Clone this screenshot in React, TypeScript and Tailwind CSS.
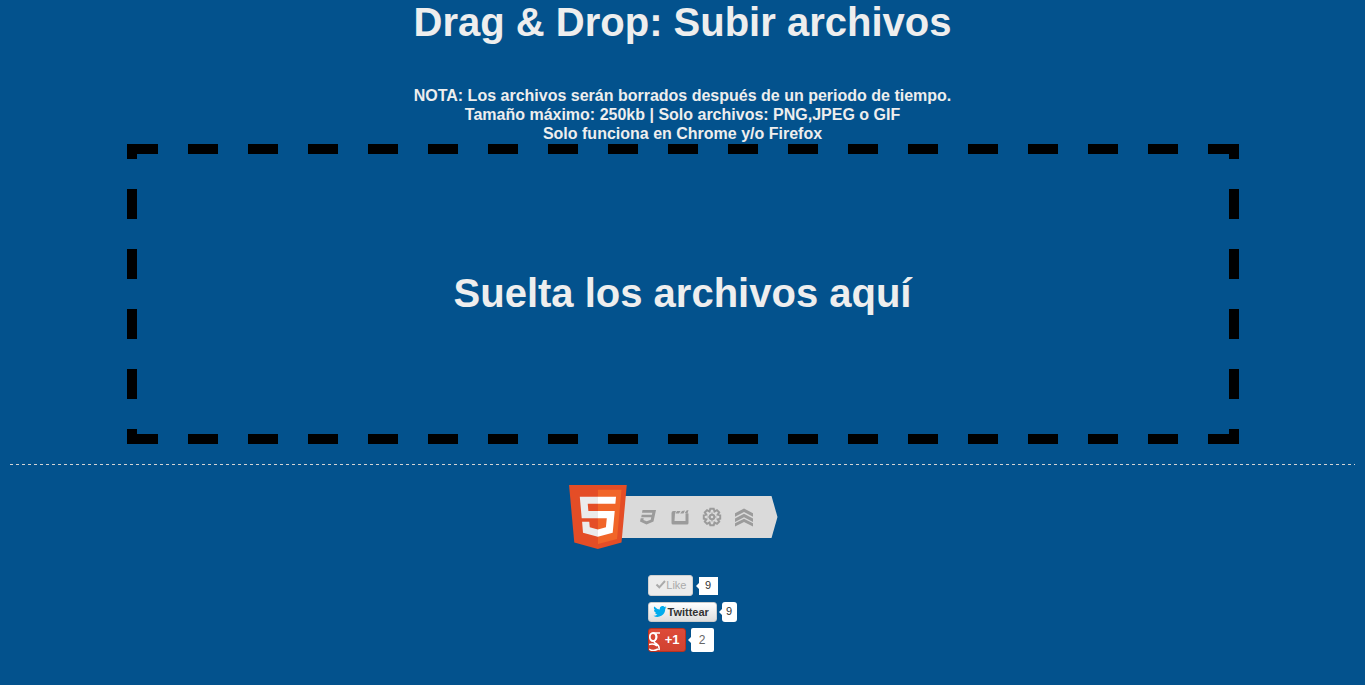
import React from "react";

const noteLines = [
  "NOTA: Los archivos serán borrados después de un periodo de tiempo.",
  "Tamaño máximo: 250kb | Solo archivos: PNG,JPEG o GIF",
  "Solo funciona en Chrome y/o Firefox",
];

function DashedX({ className }: { className: string }) {
  return (
    <span
      className={`absolute inset-x-0 h-[10px] bg-[repeating-linear-gradient(90deg,#000_0_30px,transparent_30px_60px)] bg-[position:1px_0] bg-[size:60px_10px] ${className}`}
    />
  );
}

function DashedY({ className }: { className: string }) {
  return (
    <span
      className={`absolute inset-y-0 w-[10px] bg-[linear-gradient(180deg,#000_0_15px,transparent_15px_45px,#000_45px_60px)] bg-[size:10px_60px] ${className}`}
    />
  );
}

function DropZone() {
  return (
    <section className="relative mx-auto flex h-[300px] w-[calc(80%+20px)] items-center justify-center pb-0.5">
      <DashedX className="top-0" />
      <DashedX className="bottom-0" />
      <DashedY className="left-0" />
      <DashedY className="right-0" />
      <h2 className="text-[40px] leading-[46px] font-bold">Suelta los archivos aquí</h2>
    </section>
  );
}

function Html5Badge() {
  return (
    <svg width="211" height="64" viewBox="0 0 211 64" role="img" aria-label="HTML5">
      <path d="M50 11H203.500L209.500 32L203.500 53H50Z" fill="#dadada" />
      <g transform="translate(-2.8 0) scale(.128 .125)">
        <path d="M71 460 30 0H481L440 460 255 512Z" fill="#e44d26" />
        <path d="M256 472 405 431 440 37H256Z" fill="#f16529" />
        <path d="M256 208H181L176 150H256V94H114L129 265H256ZM256 355H255L192 338 188 293H132L139 382 255 414H256Z" fill="#ebebeb" />
        <path d="M255 208V265H325L318 338 255 355V414L371 382 387 208ZM255 94V150H392L397 94Z" fill="#fff" />
      </g>
      <path d="M74.500 25H88L85.500 36.500 78.500 39.500 72 36.500 72.700 33.200H75.700L75.400 35 78.700 36.200 82.700 34.700 83.300 32.300H73.200L73.700 29.800H83.900L84.300 27.800H74Z" fill="#9b9b9b" />
      <path d="M103.500 28Q103.500 26 105.500 26H108L107 28.500 106.500 36H117.500V28.500H120.500V38Q120.500 39.500 119 39.500H105Q103.500 39.500 103.500 38ZM107.500 28.500 109 26H112.500L111 28.500ZM112.200 28.500 114 26 117 25.500 115.500 28.500ZM116.800 28 118.500 25.500 120.500 25 119.500 28.500Z" fill="#9b9b9b" />
      <g fill="none" stroke="#9b9b9b">
        <path
          d="M142.300 23.800H145.700L146.500 26.500 149 25.200 151.200 27.400 149.700 29.700 152.200 30.300V33.700L149.700 34.300 151.200 36.600 149 38.800 146.500 37.500 145.700 40.200H142.300L141.500 37.500 139 38.800 136.800 36.600 138.300 34.300 135.800 33.700V30.300L138.300 29.700 136.800 27.400 139 25.200 141.500 26.500Z"
          strokeWidth="2"
        />
        <circle cx="144" cy="32" r="2.300" strokeWidth="2" />
        <path d="M144 27.500V29.500M144 34.500V36.500M139.500 32H141.500M146.500 32H148.500" strokeWidth="1" />
      </g>
      <path d="M167 28.200 176 23.500 185 28.200V31.700L176 27 167 31.700ZM167 33.400 176 28.700 185 33.400V36.900L176 32.200 167 36.900ZM167 38.200 176 33.700 185 38.200V41.400L176 37 167 41.400Z" fill="#9b9b9b" />
    </svg>
  );
}

function Count({ children, className }: { children: React.ReactNode; className: string }) {
  return (
    <span className={`relative flex items-center justify-center bg-white ${className}`}>
      <svg className="absolute top-1/2 right-full -translate-y-1/2" width="3" height="6" viewBox="0 0 3 6" aria-hidden="true">
        <path d="M3 0V6L0 3Z" fill="#fff" />
      </svg>
      {children}
    </span>
  );
}

function ShareButtons() {
  return (
    <div className="mx-auto flex w-[70px] flex-col gap-[6px]">
      <div className="flex items-center gap-[6px]">
        <button className="flex h-[21px] w-[45px] shrink-0 items-center justify-end rounded-[3px] border border-[#d0d0d0] bg-[#ececec] pr-[5px] pb-0.5 text-[11px] leading-[14px] text-[#aaa]">
          <svg width="11" height="9" viewBox="0 0 11 9" aria-hidden="true">
            <path d="M1.500 4.500 4.300 7.300 10 1" fill="none" stroke="#aaa" strokeWidth="2" />
          </svg>
          Like
        </button>
        <Count className="h-[18px] w-[19px] shrink-0 text-[11px] text-[#333]">9</Count>
      </div>
      <div className="flex items-center gap-[5px]">
        <button className="flex h-5 w-[69px] shrink-0 items-center gap-px rounded-[3px] border border-[#ccc] bg-linear-to-b from-white to-[#dedede] pb-px pl-1 text-[11px] leading-[18px] font-bold text-[#333]">
          <svg width="14" height="11" viewBox="0 0 24 20" aria-hidden="true">
            <path d="M24 2.400a10 10 0 0 1-2.800.8A5 5 0 0 0 23.300.500a10 10 0 0 1-3.100 1.200A4.900 4.900 0 0 0 11.800 6.200 14 14 0 0 1 1.700 1a4.900 4.900 0 0 0 1.500 6.600A4.900 4.900 0 0 1 1 7v.1a4.900 4.900 0 0 0 3.900 4.800 5 5 0 0 1-2.200.1 4.900 4.900 0 0 0 4.600 3.400A9.900 9.900 0 0 1 0 17.500 14 14 0 0 0 21.500 5.100 10 10 0 0 0 24 2.400Z" fill="#00aced" />
          </svg>
          Twittear
        </button>
        <Count className="h-5 w-[15px] shrink-0 rounded-[3px] pb-px text-[11px] text-[#333]">9</Count>
      </div>
      <div className="flex items-center gap-[5px]">
        <button className="flex h-6 w-[38px] shrink-0 items-center justify-between overflow-hidden rounded-[3px] border border-[#b8321f] bg-linear-to-b from-[#dd4b39] to-[#d14230] pr-[5px] text-[13px] leading-[18px] font-bold text-white">
          <svg width="12" height="22" viewBox="0 0 12 22" aria-hidden="true">
            <g fill="none" stroke="#fff">
              <ellipse cx="4" cy="8" rx="3.200" ry="4" strokeWidth="1.800" />
              <path d="M4 4H11M7 5Q9 9 6 11.500Q4 13 7 14.500Q11 17 10 21M0 15.500Q5 14 8 17M0 20Q4 23 9 20" strokeWidth="1.500" />
            </g>
          </svg>
          +1
        </button>
        <Count className="h-6 w-[23px] shrink-0 rounded-[2px] text-[12px] text-[#666]">2</Count>
      </div>
    </div>
  );
}

export default function App() {
  return (
    <main className="min-h-screen bg-[#03528d] font-['Liberation_Sans',Arial,sans-serif] text-[#eee]">
      <header className="pb-px text-center font-bold">
        <h1 className="text-[40px] leading-[44px]">Drag &amp; Drop: Subir archivos</h1>
        <p className="mt-[42px] text-[16px] leading-[19px]">
          {noteLines.map((line) => (
            <span key={line} className="block">{line}</span>
          ))}
        </p>
      </header>
      <DropZone />
      <hr className="mx-[10px] mt-5 h-px border-0 bg-[repeating-linear-gradient(90deg,#d3d3d3_0_3px,transparent_3px_6px)]" />
      <footer className="pt-5 pb-8">
        <div className="mb-[26px] flex justify-center pr-[18px]">
          <Html5Badge />
        </div>
        <ShareButtons />
      </footer>
    </main>
  );
}
